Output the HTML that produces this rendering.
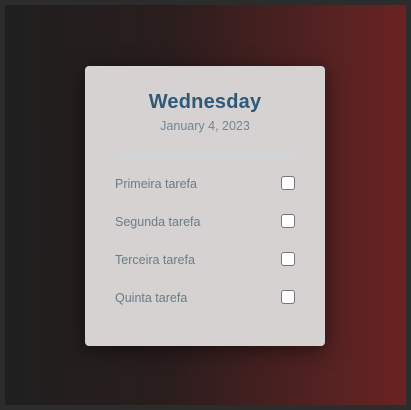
<!DOCTYPE html>
<html><head><style>
html,body{margin:0;padding:0;}
body{width:411px;height:410px;background:#2c2c2c;position:relative;overflow:hidden;font-family:"Liberation Sans",sans-serif;}
.bg{position:absolute;left:5px;top:5px;width:401px;height:400px;background:linear-gradient(to right,#1f1f1f 0%,#2a1d1d 40%,#5a2222 85%,#6a2222 100%);}
.card{position:absolute;left:85px;top:66px;width:240px;height:280px;background:#d6d2d2;border-radius:4px;box-shadow:0 4px 20px rgba(0,0,0,.5);}
h1{margin:0;position:absolute;top:25px;width:100%;text-align:center;font-size:20px;font-weight:bold;color:#2e5a77;letter-spacing:0.2px;}
.date{position:absolute;top:53px;width:100%;text-align:center;font-size:12.5px;color:#6f8697;}
.hr{position:absolute;left:30px;width:180px;top:88px;height:1px;background:#c8dbe4;}
.row{position:absolute;left:30px;width:180px;font-size:12.5px;color:#6a7c88;}
.cb{position:absolute;right:0;top:-1px;width:12px;height:12px;background:#fff;border:1px solid #777;border-radius:3px;}
</style></head><body>
<div class="bg"></div>
<div class="card">
<h1>Wednesday</h1>
<div class="date">January 4, 2023</div>
<div class="hr"></div>
<div class="row" style="top:111px">Primeira tarefa<span class="cb"></span></div>
<div class="row" style="top:149px">Segunda tarefa<span class="cb"></span></div>
<div class="row" style="top:187px">Terceira tarefa<span class="cb"></span></div>
<div class="row" style="top:225px">Quinta tarefa<span class="cb"></span></div>
</div>
</body></html>
